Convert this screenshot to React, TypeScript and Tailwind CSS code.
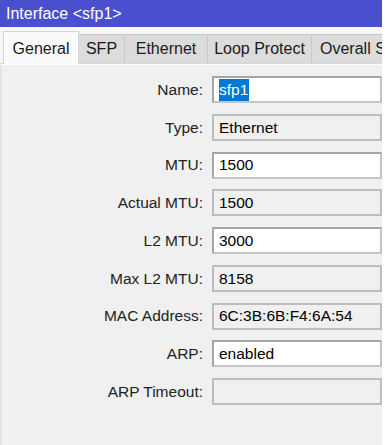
import React from "react";

const font = { fontFamily: '"Liberation Sans", Arial, sans-serif' };

type Row = { label: string; value: string; editable?: boolean; selected?: boolean };

const rows: Row[] = [
  { label: "Name:", value: "sfp1", editable: true, selected: true },
  { label: "Type:", value: "Ethernet" },
  { label: "MTU:", value: "1500", editable: true },
  { label: "Actual MTU:", value: "1500" },
  { label: "L2 MTU:", value: "3000", editable: true },
  { label: "Max L2 MTU:", value: "8158" },
  { label: "MAC Address:", value: "6C:3B:6B:F4:6A:54" },
  { label: "ARP:", value: "enabled", editable: true },
  { label: "ARP Timeout:", value: "" },
];

const tabs = ["SFP", "Ethernet", "Loop Protect", "Overall Stats"];
const tabWidths = ["w-[46px]", "w-[83px]", "w-[104px]", "w-[110px]"];

export default function App() {
  return (
    <div className="w-[385px] h-[445px] bg-white overflow-hidden" style={font}>
      <div className="w-[382px] h-[445px] flex flex-col bg-[#f0f0f0] overflow-hidden">
        <div className="h-[27px] bg-[#4a4fce] text-white text-[16px] leading-[27px] pl-[6px] shrink-0">
          Interface &lt;sfp1&gt;
        </div>
        <div className="h-[3px] bg-[#f7f7f7] shrink-0" />
        <div className="relative h-[34px] shrink-0 flex items-end pl-[3px] bg-[#f7f7f7] overflow-hidden">
          <div className="relative z-10 shrink-0 w-[76px] h-[35px] bg-[#fafafa] border border-b-0 border-[#d4d4d4] text-[16px] text-[#1a1a1a] flex items-start justify-center pt-[5px] mb-[-2px]">
            General
          </div>
          {tabs.map((t, i) => (
            <div
              key={t}
              className={`${tabWidths[i]} h-[30px] shrink-0 bg-[#dcdcdc] border-t border-r border-[#c8c8c8] text-[16px] text-[#1a1a1a] flex items-center whitespace-nowrap overflow-hidden pb-[1px] ${
                i === 3 ? "justify-start pl-[8px]" : "justify-center"
              }`}
            >
              {t}
            </div>
          ))}
          <div className="absolute left-0 right-0 bottom-0 h-px bg-[#d6d6d6]" />
        </div>
        <div className="flex-1 border-l-2 border-[#e4e4e4] border-t border-t-white pt-[11px]">
          <div className="grid grid-cols-[201px_1fr] gap-x-[9px] gap-y-[10.75px]">
            {rows.map((r) => (
              <React.Fragment key={r.label}>
                <div className="h-[27px] flex items-center justify-end text-[15.5px] text-[#222] whitespace-nowrap">
                  {r.label}
                </div>
                <div
                  className={`h-[27px] border-2 flex items-center pl-[5px] text-[15.5px] text-black whitespace-nowrap overflow-hidden ${
                    r.editable
                      ? "bg-white border-t-[#a6a6a6] border-l-[#a6a6a6] border-r-[#c4c4c4] border-b-[#c4c4c4]"
                      : "bg-[#f0f0f0] border-[#bdbdbd]"
                  }`}
                >
                  {r.selected ? (
                    <span className="bg-[#0078d7] text-white h-[22px] leading-[22px] pr-[1px]">{r.value}</span>
                  ) : (
                    r.value
                  )}
                </div>
              </React.Fragment>
            ))}
          </div>
        </div>
      </div>
    </div>
  );
}
